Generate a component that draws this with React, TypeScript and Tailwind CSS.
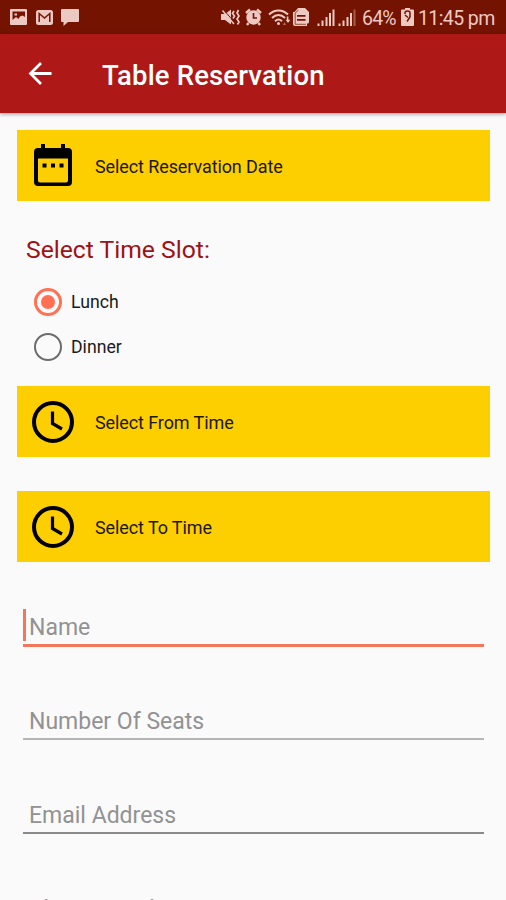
import { useState } from "react";
import { clsx } from "clsx";

const fields = ["Name", "Number Of Seats", "Email Address", "Phone Number"];

function StatusBar() {
  return (
    <div className="flex h-[34px] shrink-0 items-center bg-[#741300] text-[#ecc9c2]">
      <svg className="ml-[10px] h-4 w-[17px] shrink-0" viewBox="0 0 17 16" fill="currentColor">
        <path
          fillRule="evenodd"
          d="M1 0h15a1 1 0 0 1 1 1v14a1 1 0 0 1-1 1H1a1 1 0 0 1-1-1V1a1 1 0 0 1 1-1zM2.500 2.500v8.500l3.500-3 2.500 2 1.500-2.500 2.500-1 2.500 1.500V2.500zM4.500 4.500H7v2H4.500z"
        />
      </svg>
      <svg className="ml-[9px] h-[15px] w-[17px] shrink-0" viewBox="0 0 17 15" fill="currentColor">
        <rect width="17" height="15" rx="2.500" />
        <path d="M3.200 12V3.500L8.500 8l5.300-4.500V12" fill="none" stroke="#741300" strokeWidth="1.500" />
      </svg>
      <svg className="mt-px ml-2 h-[17px] w-[18px] shrink-0" viewBox="0 0 18 17" fill="currentColor">
        <path d="M1 0h16a1 1 0 0 1 1 1v11a1 1 0 0 1-1 1H7l-4.500 4V13H1a1 1 0 0 1-1-1V1a1 1 0 0 1 1-1z" />
      </svg>

      {/* muted + vibrate */}
      <svg className="ml-[142px] h-[18px] w-[19px] shrink-0" viewBox="0 0 19 18" fill="currentColor">
        <path d="M0 6h4l6-4.500v15L4 12H0z" />
        <path d="M2.500 1.500l11 13" stroke="#741300" strokeWidth="1" />
        <path d="M1.500 2.500l11.500 13.500" stroke="currentColor" strokeWidth="1.500" />
        <path d="M13 3l-1.500 2.500L13.500 8 12 10.500M17.500 2L16 5l2 3-2 3 2 3-1.500 2.500" fill="none" stroke="currentColor" strokeWidth="1.700" />
      </svg>
      <svg className="ml-[5px] h-[18px] w-[17px] shrink-0" viewBox="0 0 17 18" fill="currentColor">
        <circle cx="8.500" cy="9.500" r="7.200" />
        <path d="M1 5l4-3.500M16 5l-4-3.500M3.500 15L2 17M13.500 15l1.500 2" stroke="currentColor" strokeWidth="2.400" />
        <path d="M8.500 5v5H12" fill="none" stroke="#741300" strokeWidth="1.600" />
      </svg>
      <svg className="ml-[6px] h-[18px] w-[24px] shrink-0" viewBox="0 0 24 18" fill="none" stroke="currentColor" strokeWidth="2">
        <path d="M1 6.500c5.500-5.500 13.500-5.500 19 0M4 10c4-4 9-4 13 0M7 13.200c2.200-2 5-2 7 0" />
        <circle cx="10.500" cy="15.500" r="1.500" fill="currentColor" stroke="none" />
        <path d="M16.500 14l1.500 3h-3z" fill="currentColor" stroke="none" opacity=".5" />
        <path d="M20.500 9.500v4h2.500l-3 4-3-4h1.500v-4z" transform="translate(4 1) scale(.8)" fill="currentColor" stroke="none" />
      </svg>
      <svg className="ml-px h-[18px] w-4 shrink-0" viewBox="0 0 16 18" fill="currentColor">
        <path d="M5 0h7l4 4v10a1.500 1.500 0 0 1-1.500 1.500H14V18H2a2 2 0 0 1-2-2V4h1.500z" />
        <path d="M4 7h8.500v1.800H4zM4 11h8.500v1.800H4z" fill="#741300" />
        <path d="M2.200 5v11.300H13M2.200 5L5.500 2" fill="none" stroke="#741300" strokeWidth=".7" />
      </svg>
      <SignalIcon className="ml-2" full />
      <SignalIcon className="ml-[3px]" />
      <span className="ml-[6px] mt-[3px] w-[34px] whitespace-nowrap text-[19.500px] leading-none tracking-[-0.800px]">
        64%
      </span>
      <svg className="ml-[5px] h-[18px] w-[13px] shrink-0" viewBox="0 0 13 18" fill="currentColor">
        <path d="M4 0h5v1.500h3a1 1 0 0 1 1 1V17a1 1 0 0 1-1 1H1a1 1 0 0 1-1-1V2.500a1 1 0 0 1 1-1h3z" />
        <path d="M4 6V5a2.500 2 0 0 1 5 0v4L6 13.500M4 7l3 2.500" fill="none" stroke="#741300" strokeWidth="1.500" />
      </svg>
      <span className="ml-[4px] mt-[3px] whitespace-nowrap text-[19.500px] leading-none tracking-[-0.600px]">
        11:45 pm
      </span>
    </div>
  );
}

function SignalIcon({ className, full }: { className?: string; full?: boolean }) {
  return (
    <svg className={clsx("h-[17px] w-[18px] shrink-0", className)} viewBox="0 0 18 17" fill="currentColor">
      <path d="M0.500 14.500h2V17h-2zM4.500 11.500h2V17h-2zM8.500 8h2v9h-2zM12 4h2v13h-2z" />
      <path d="M15.500 0.500h2V17h-2z" opacity={full ? 1 : 0.4} />
    </svg>
  );
}

function CalendarIcon() {
  return (
    <svg className="h-[43px] w-[38px]" viewBox="0 0 38 43">
      <path d="M7 0h4v6H7zM27 0h4v6h-4z" />
      <path
        fillRule="evenodd"
        d="M4 4h30a4 4 0 0 1 4 4v30a4 4 0 0 1-4 4H4a4 4 0 0 1-4-4V8a4 4 0 0 1 4-4zM4 14.500V36.500a2 2 0 0 0 2 2h26a2 2 0 0 0 2-2V14.500z"
      />
      <path d="M8.500 19.500h4v4h-4zM17 19.500h4v4h-4zM25.500 19.500h4v4h-4z" />
    </svg>
  );
}

function ClockIcon() {
  return (
    <svg className="h-[42px] w-[42px]" viewBox="0 0 42 42" fill="none" stroke="black">
      <circle cx="21" cy="21" r="19" strokeWidth="4" />
      <path d="M20.500 10.500v12L30 28" strokeWidth="3.200" />
    </svg>
  );
}

interface PickerButtonProps {
  icon: "calendar" | "clock";
  label: string;
  className?: string;
}

function PickerButton({ icon, label, className }: PickerButtonProps) {
  return (
    <button className={clsx("flex h-[71px] w-[473px] items-center bg-[#fecf00] text-left", className)}>
      <span className="ml-[14px] flex w-[44px] justify-center">
        {icon === "calendar" ? <CalendarIcon /> : <ClockIcon />}
      </span>
      <span className="ml-[20px] mt-[3px] text-[18px] leading-none tracking-[-0.100px] text-[#1c1800]">{label}</span>
    </button>
  );
}

export default function App() {
  const [slot, setSlot] = useState("Lunch");

  return (
    <div className="flex h-[900px] w-[506px] flex-col overflow-hidden bg-[#fafafa] font-[Roboto,sans-serif]">
      <StatusBar />
      <header className="flex h-[79px] shrink-0 items-center bg-[#ae1817] text-white shadow-[0_1px_4px_rgba(0,0,0,0.4)]">
        <svg className="ml-[28px] h-[23px] w-6" viewBox="0 0 24 23" fill="none" stroke="currentColor" strokeWidth="2.800">
          <path d="M23.500 11.500H2.500M13 1L2.500 11.500 13 22" />
        </svg>
        <h1 className="ml-[50px] mt-[4px] whitespace-nowrap text-[27.500px] leading-none font-medium tracking-[0.150px]">
          Table Reservation
        </h1>
      </header>

      <main className="flex flex-1 flex-col pl-[17px]">
        <PickerButton icon="calendar" label="Select Reservation Date" className="mt-[17px] shrink-0" />

        <h2 className="mt-[34px] ml-[9px] h-[31px] text-[24.700px] leading-[30px] text-[#9f1115]">Select Time Slot:</h2>
        <div className="mt-[13px] ml-[17px] flex flex-col">
          {["Lunch", "Dinner"].map((name) => (
            <button key={name} onClick={() => setSlot(name)} className="flex h-[45px] items-center">
              <span
                className={clsx(
                  "flex size-7 items-center justify-center rounded-full",
                  slot === name ? "border-3 border-[#ff7152]" : "border-[2.500px] border-[#6c6c6c]"
                )}
              >
                {slot === name && <span className="size-[14px] rounded-full bg-[#ff7152]" />}
              </span>
              <span className="ml-[9px] mt-[3px] text-[17.700px] leading-none text-[#1a1a1a]">{name}</span>
            </button>
          ))}
        </div>

        <PickerButton icon="clock" label="Select From Time" className="mt-[17px] shrink-0" />
        <PickerButton icon="clock" label="Select To Time" className="mt-[34px] shrink-0" />

        <form className="mt-[46px] ml-[6px] flex w-[461px] flex-col">
          {fields.map((field, i) => (
            <div key={field} className="h-[94px] shrink-0">
              <div
                className={clsx(
                  "flex items-start",
                  i === 0 && "h-[39px] border-b-3 border-[#f2775b]",
                  i === 1 && "h-[38px] border-b-2 border-[#b5b5b5]",
                  i > 1 && "h-[38px] border-b-2 border-[#898989]"
                )}
              >
                <span className={clsx("mt-px h-[32px] w-[3px]", i === 0 && "bg-[#f2775b]")} />
                <span className="ml-[3px] text-[23px] leading-[39px] text-[#929292]">{field}</span>
              </div>
            </div>
          ))}
        </form>
      </main>
    </div>
  );
}
